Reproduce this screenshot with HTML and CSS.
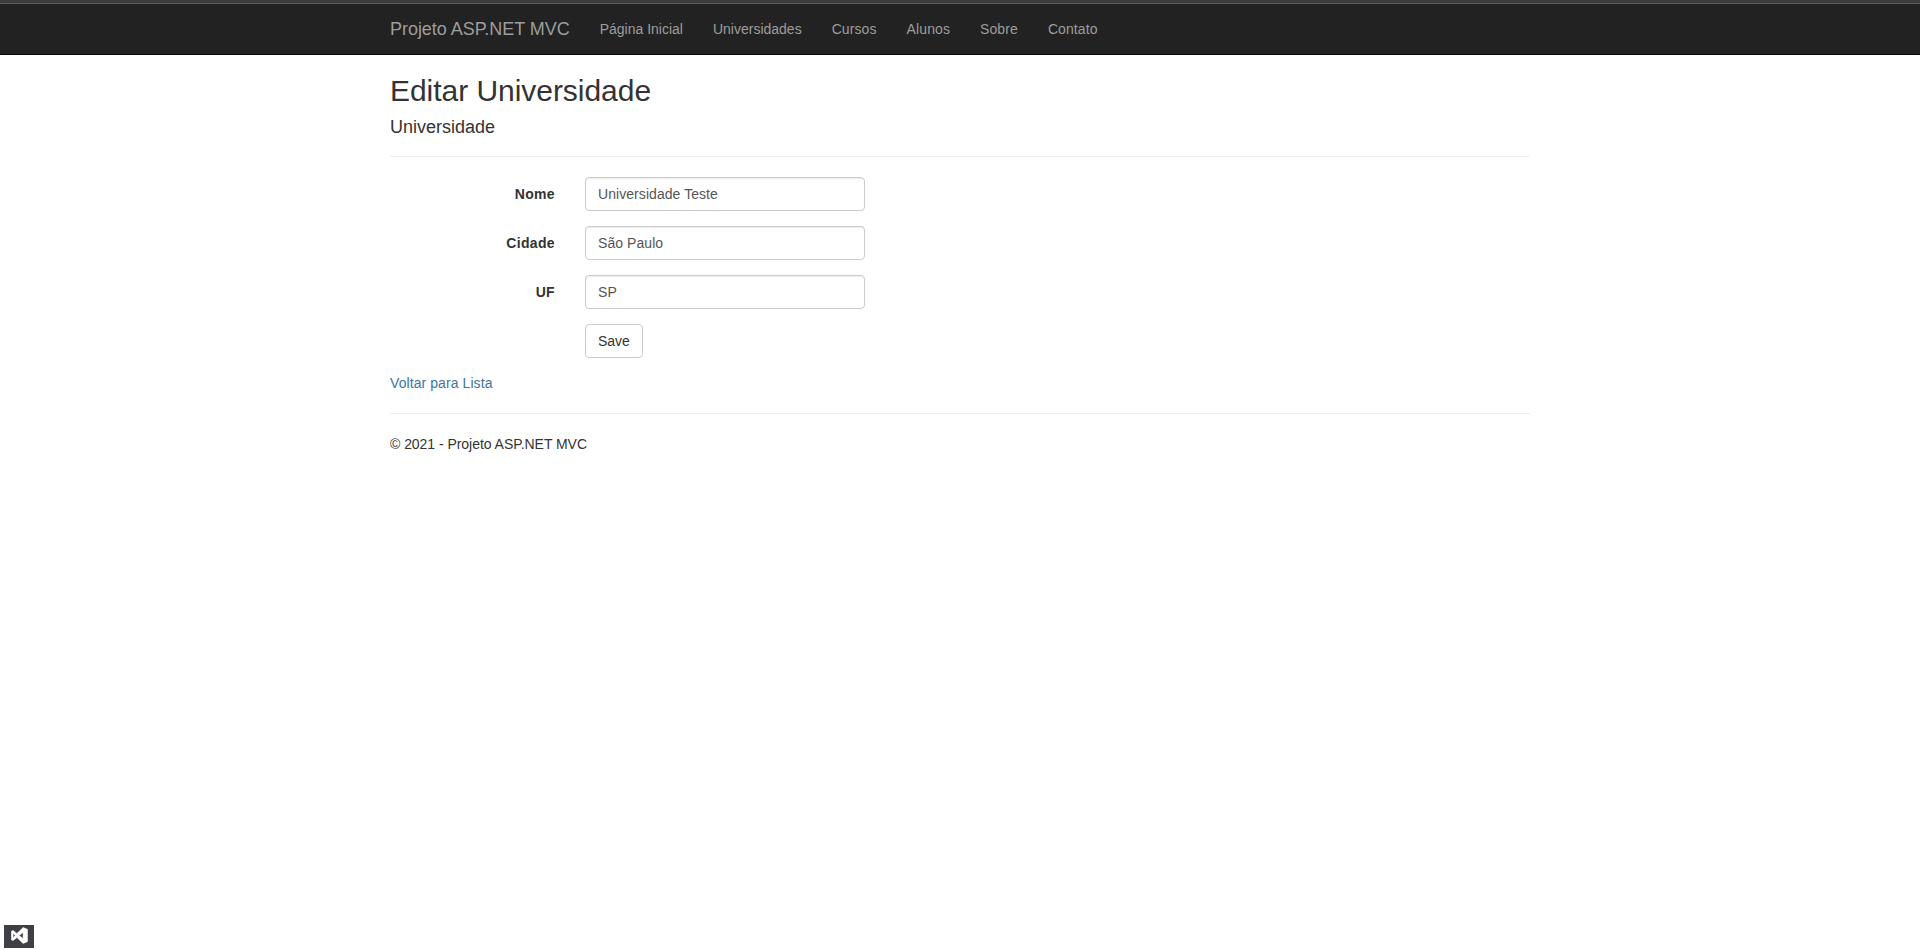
FILE: index.html
```html
<!DOCTYPE html>
<html lang="pt-BR">
<head>
<meta charset="utf-8">
<title>Editar Universidade - Projeto ASP.NET MVC</title>
<link rel="stylesheet" href="styles.css">
</head>
<body>
<header class="navbar">
  <nav class="container navbar-inner">
    <a class="brand" href="#">Projeto ASP.NET MVC</a>
    <a class="nav-link" href="#">Página Inicial</a>
    <a class="nav-link" href="#">Universidades</a>
    <a class="nav-link nav-short" href="#">Cursos</a>
    <a class="nav-link nav-short" href="#">Alunos</a>
    <a class="nav-link nav-short" href="#">Sobre</a>
    <a class="nav-link nav-short" href="#">Contato</a>
  </nav>
</header>
<main class="container">
  <h2 class="title">Editar Universidade</h2>
  <form class="form">
    <h4 class="subtitle">Universidade</h4>
    <hr class="rule">
    <div class="form-group">
      <label class="label" for="nome">Nome</label>
      <input class="control" id="nome" type="text" value="Universidade Teste">
    </div>
    <div class="form-group">
      <label class="label" for="cidade">Cidade</label>
      <input class="control" id="cidade" type="text" value="São Paulo">
    </div>
    <div class="form-group">
      <label class="label" for="uf">UF</label>
      <input class="control" id="uf" type="text" value="SP">
    </div>
    <div class="form-group">
      <span class="label"></span>
      <button class="btn" type="button">Save</button>
    </div>
  </form>
  <div class="back"><a class="back-link" href="#">Voltar para Lista</a></div>
  <hr class="rule">
  <footer><p class="copyright">© 2021 - Projeto ASP.NET MVC</p></footer>
</main>
<div class="vs-badge">
  <svg class="vs-icon" viewBox="0 0 16 16" width="17" height="17">
    <path fill="#fff" stroke="#fff" stroke-width=".5" stroke-linejoin="round" fill-rule="evenodd" d="M11.4 0.5 15.5 2.2V13.8L11.4 15.5 5.6 9.9 2 12.8 0.3 12V4L2 3.2 5.6 6.1ZM11.4 5 7.8 8 11.4 11ZM2 5.9V10.1L4 8Z"/>
  </svg>
</div>
</body>
</html>
```
FILE: styles.css
```css
* { box-sizing: border-box; }
body {
  margin: 0;
  font-family: "Liberation Sans", Arial, sans-serif;
  font-size: 14px;
  line-height: 20px;
  color: #333;
  background: #fff;
}
.container { width: 1170px; margin: 0 auto; padding: 0 15px; }
.navbar {
  height: 55px;
  background: #222;
  border-top: 3px solid #3c3c3c;
  border-bottom: 1px solid #080808;
  box-shadow: inset 0 1px 0 #5a5a5a;
}
.navbar-inner { display: flex; align-items: flex-start; padding-top: 1px; }
.brand, .nav-link { color: #9d9d9d; text-decoration: none; padding: 15px; white-space: nowrap; }
.brand { font-size: 18px; padding-left: 0; letter-spacing: -.04px; }
.nav-short { letter-spacing: .1px; }
.title { margin: 19px 0 10px; font-size: 30px; font-weight: 400; line-height: 33px; letter-spacing: -.04px; }
.subtitle { margin: 0; padding-top: 1px; font-size: 18px; font-weight: 400; line-height: 19px; }
.rule { margin: 20px 0; border: 0; border-top: 1px solid #eee; }
.subtitle + .rule { margin-top: 19px; }
.form-group { display: flex; margin-bottom: 15px; }
.label { width: 165px; margin-right: 30px; padding-top: 7px; text-align: right; font-weight: 700; letter-spacing: .35px; }
.control {
  width: 280px;
  height: 34px;
  padding: 6px 12px;
  font: inherit;
  letter-spacing: .06px;
  color: #555;
  background: #fff;
  border: 1px solid #ccc;
  border-radius: 4px;
  box-shadow: inset 0 1px 1px rgba(0, 0, 0, .075);
}
.btn {
  height: 34px;
  padding: 6px 12px;
  font: inherit;
  color: #333;
  background: #fff;
  border: 1px solid #ccc;
  border-radius: 4px;
}
.back-link { color: #40759f; text-decoration: none; letter-spacing: .08px; }
.copyright { margin: 0 0 10px; letter-spacing: -.04px; }
.vs-badge {
  position: fixed;
  left: 4px;
  bottom: 2px;
  width: 30px;
  height: 23px;
  display: flex;
  justify-content: center;
  align-items: flex-start;
  padding-top: 2px;
  background: #3f3f46;
}
```
